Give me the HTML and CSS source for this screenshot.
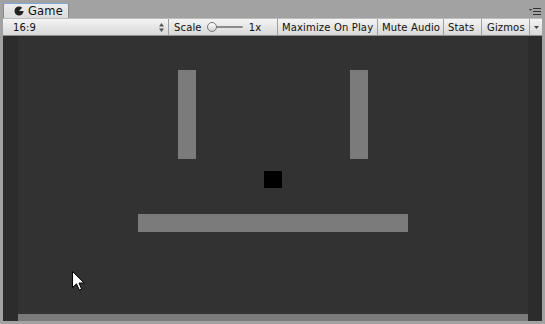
FILE: index.html
```html
<!DOCTYPE html>
<html>
<head>
<meta charset="utf-8">
<link rel="stylesheet" href="styles.css">
</head>
<body>
<div class="window">
  <div class="tabbar">
    <div class="tab">
      <svg class="tab-icon" width="10" height="10" viewBox="0 0 10 10"><path d="M5 0.5 A4.5 4.5 0 1 0 9.5 5 L5 5 L8.2 1.8 A4.5 4.5 0 0 0 5 0.5Z" fill="#222"/></svg>
      <span>Game</span>
    </div>
    <div class="tabmenu">
      <svg width="12" height="7" viewBox="0 0 12 7"><path d="M0 1h3l-1.5 2z" fill="#333"/><rect x="4" y="0" width="8" height="1" fill="#333"/><rect x="4" y="3" width="8" height="1" fill="#333"/><rect x="4" y="6" width="8" height="1" fill="#333"/></svg>
    </div>
  </div>
  <div class="toolbar">
    <div class="tb aspect"><span>16:9</span>
      <svg class="updown" width="5" height="9" viewBox="0 0 5 9"><path d="M2.5 0L5 3.5H0z M2.5 9L5 5.5H0z" fill="#555"/></svg>
    </div>
    <div class="tb scale"><span>Scale</span>
      <div class="slider"><div class="track"></div><div class="thumb"></div></div>
      <span class="val">1x</span>
    </div>
    <div class="tb maxplay">Maximize On Play</div>
    <div class="tb mute">Mute Audio</div>
    <div class="tb stats">Stats</div>
    <div class="tb gizmos">Gizmos</div>
    <div class="tb drop"><svg width="5" height="3" viewBox="0 0 5 3"><path d="M0 0H5L2.5 3z" fill="#444"/></svg></div>
  </div>
  <div class="view">
    <div class="letterbox left"></div>
    <div class="game">
      <div class="obj paddle p1"></div>
      <div class="obj paddle p2"></div>
      <div class="obj ball"></div>
      <div class="obj floor"></div>
      <div class="ground"></div>
      <svg class="cursor" width="13" height="20" viewBox="0 0 13 20"><path d="M0.5 0.5V16.5L4.5 12.8L7.3 19L9.6 18L7 12H12.2Z" fill="#fff" stroke="#000" stroke-width="1"/></svg>
    </div>
    <div class="letterbox right"></div>
  </div>
</div>
</body>
</html>
```
FILE: styles.css
```css
html, body {
  margin: 0;
  padding: 0;
  background: #a2a2a2;
}
.window {
  width: 545px;
  height: 324px;
  display: flex;
  flex-direction: column;
  font-family: "DejaVu Sans", sans-serif;
  font-size: 10px;
  letter-spacing: 0.15px;
  color: #111;
  overflow: hidden;
}
.tabbar {
  height: 18px;
  display: flex;
  align-items: flex-end;
  padding-left: 3px;
  position: relative;
  flex: none;
}
.tab {
  width: 66px;
  height: 15px;
  box-sizing: border-box;
  background: linear-gradient(#ececec, #dcdcdc);
  border: 1px solid #8a8a8a;
  border-bottom: none;
  border-top: 1px solid #7fa6d6;
  border-radius: 2px 2px 0 0;
  display: flex;
  align-items: center;
  gap: 4px;
  padding-left: 10px;
  font-size: 11.5px;
  letter-spacing: 0.2px;
}
.tab-icon { flex: none; }
.tabmenu {
  position: absolute;
  right: 4px;
  top: 8px;
  line-height: 0;
}
.toolbar {
  height: 18px;
  box-sizing: border-box;
  flex: none;
  display: flex;
  margin: 0 3px;
  background: linear-gradient(#f4f4f4, #d8d8d8);
  border-top: 1px solid #bdbdbd;
  border-bottom: 1px solid #8f8f8f;
}
.tb {
  display: flex;
  align-items: center;
  padding: 0 4px;
  border-right: 1px solid #a0a0a0;
  white-space: nowrap;
  box-sizing: border-box;
}
.aspect {
  width: 166px;
  padding-left: 10px;
  justify-content: space-between;
  padding-right: 4px;
}
.scale {
  width: 109px;
  padding-left: 5px;
}
.maxplay { width: 100px; }
.mute { width: 66px; }
.stats { width: 38px; }
.gizmos { width: 48px; padding-left: 5px; }
.slider {
  position: relative;
  width: 36px;
  height: 10px;
  margin-left: 5px;
}
.track {
  position: absolute;
  left: 2px; right: 0; top: 4px;
  height: 2px;
  background: #8c8c8c;
  border-radius: 1px;
}
.thumb {
  position: absolute;
  left: 0; top: 0;
  width: 10px; height: 10px;
  box-sizing: border-box;
  border-radius: 50%;
  border: 1px solid #777;
  background: linear-gradient(#ffffff, #d0d0d0);
}
.val { margin-left: 6px; }
.drop { flex: 1; padding: 0; justify-content: center; border-right: none; }
.view {
  flex: 1;
  display: flex;
  margin: 0 3px 3px 3px;
  background: #2c2c2c;
}
.letterbox.left { width: 15px; }
.letterbox.right { width: 13px; }
.game {
  width: 510px;
  position: relative;
  background: #323232;
}
.obj { position: absolute; background: #7b7b7b; }
.paddle { width: 18px; height: 89px; top: 34px; }
.p1 { left: 160px; }
.p2 { left: 332px; }
.ball { left: 246px; top: 135px; width: 18px; height: 17px; background: #000; }
.floor { left: 120px; top: 178px; width: 270px; height: 18px; }
.ground {
  position: absolute;
  left: 0; right: 0; bottom: 0;
  height: 7px;
  background: #7b7b7b;
}
.cursor { position: absolute; left: 54px; top: 235px; }
```
